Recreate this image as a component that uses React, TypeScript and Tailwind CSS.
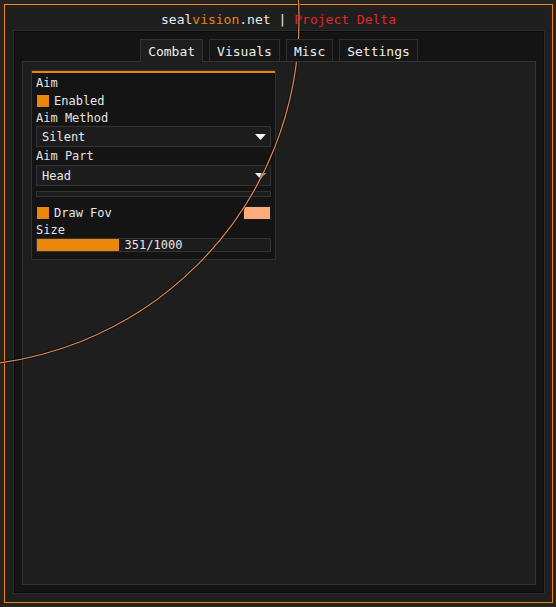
import { useState } from "react";

const tabs = ["Combat", "Visuals", "Misc", "Settings"];

function Label({ text, className = "" }: { text: string; className?: string }) {
  return <div className={"h-[14px] leading-[14px] text-[12px] text-[#e2e2e2] " + className}>{text}</div>;
}

function Checkbox({ label, className = "" }: { label: string; className?: string }) {
  return (
    <div className={"flex items-center gap-[4px] " + className}>
      <span className="w-[14px] h-[14px] border border-[#0e0e0e] bg-[#e8870b]" />
      <span className="text-[12px] leading-[14px] text-[#e8e8e8]">{label}</span>
    </div>
  );
}

function Dropdown({ value, className = "" }: { value: string; className?: string }) {
  return (
    <div className={"h-[21px] flex items-center justify-between border border-[#333] bg-[#1c1c1c] pl-[5px] pr-[4px] " + className}>
      <span className="text-[12px] text-[#e8e8e8]">{value}</span>
      <svg width="11" height="6" viewBox="0 0 11 6">
        <polygon points="0,0 11,0 5.5,6" fill="#f2f2f2" />
      </svg>
    </div>
  );
}

export default function App() {
  const [active, setActive] = useState("Combat");
  const size = 351;

  return (
    <div className="relative w-[556px] h-[607px] overflow-hidden bg-[#262320] pl-[4px] pt-[4px] font-['DejaVu_Sans_Mono',monospace]">
      <div className="w-[549px] h-[599px] border border-[#f0870f] bg-[#1f1f1f] flex flex-col">
        {/* Title */}
        <div className="h-[25px] flex items-center justify-center pt-[5px] text-[13px] text-[#ececec]">
          <span>seal</span>
          <span className="text-[#e8870b]">vision</span>
          <span>.net | </span>
          <span className="ml-[8px] text-[#e2262a]">Project Delta</span>
        </div>

        {/* Outer panel */}
        <div className="flex-1 ml-[8px] mr-[7px] mb-[8px] flex flex-col border border-[#2c2c2c] bg-[#141414] p-2 shadow-[inset_0_0_0_1px_#0b0b0b]">
          {/* Tabs */}
          <div className="relative z-10 -mb-px flex justify-center gap-[6px]">
            {tabs.map((t) => (
              <button
                key={t}
                onClick={() => setActive(t)}
                className={
                  "h-[23px] px-[7px] border pt-px text-[13px] leading-[21px] text-[#efefef] " +
                  (active === t
                    ? "border-[#333] border-b-[#1e1e1e] bg-[#1e1e1e]"
                    : "border-[#2e2e2e] border-b-[#333] bg-[#161616]")
                }
              >
                {t}
              </button>
            ))}
          </div>

          {/* Content panel */}
          <div className="flex-1 border border-[#333] bg-[#1e1e1e] p-2">
            {/* Aim group */}
            <div className="w-[245px] border border-[#303030] bg-[#141414] pb-[7px]">
              <div className="h-[2px] bg-[#e8870b]" />
              <div className="px-[4px] flex flex-col">
                <Label text="Aim" className="mt-[3px]" />
                <Checkbox label="Enabled" className="mt-[4px] h-[14px]" />
                <Label text="Aim Method" className="mt-[3px]" />
                <Dropdown value="Silent" className="mt-[1px]" />
                <Label text="Aim Part" className="mt-[2px]" />
                <Dropdown value="Head" className="mt-[2px]" />
                <div className="mt-[5px] h-[6px] border border-[#333] bg-[#1c1c1c]" />
                <div className="mt-[9px] h-[14px] flex items-center justify-between">
                  <Checkbox label="Draw Fov" />
                  <span className="w-[28px] h-[14px] border border-[#1a1a1a] bg-[#ffab7c]" />
                </div>
                <Label text="Size" className="mt-[3px]" />
                <div className="mt-[1px] relative h-[14px] border border-[#333] bg-[#1c1c1c]">
                  <div className="h-full bg-[#e8870b]" style={{ width: `${(size / 1000) * 100}%` }} />
                  <span className="absolute inset-0 flex items-center justify-center text-[12px] leading-[12px] text-[#e8e8e8]">
                    {size}/1000
                  </span>
                </div>
              </div>
            </div>
          </div>
        </div>
      </div>

      {/* FOV circle overlay */}
      <svg className="pointer-events-none absolute inset-0" width="556" height="607" viewBox="0 0 556 607">
        <circle cx="-47" cy="20" r="346" fill="none" stroke="#000" strokeOpacity="0.5" strokeWidth="3" />
        <circle cx="-47" cy="20" r="346" fill="none" stroke="#e08a52" strokeWidth="1.2" />
      </svg>
    </div>
  );
}
